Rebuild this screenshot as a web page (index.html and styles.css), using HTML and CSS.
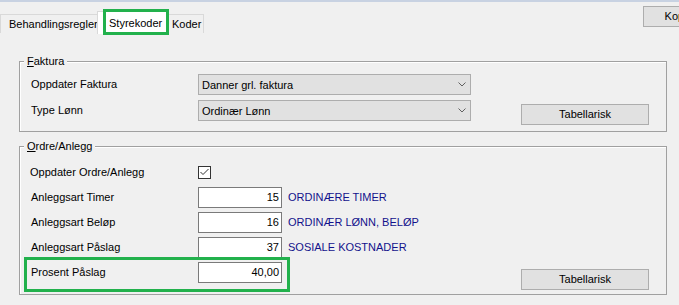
FILE: index.html
```html
<!DOCTYPE html>
<html>
<head>
    <title>Styrekoder</title>
    <link rel="stylesheet" href="styles.css">
</head>
<body>
    <div class="topbar"></div>

    <div class="header">
        <div class="tab">Behandlingsregler</div>
        <div class="tab selected">Styrekoder</div>
        <div class="tab last">Koder</div>
        <div class="btn top-btn">Kopier</div>
    </div>

    <div class="group faktura">
        <div class="legend"><u>F</u>aktura</div>
        <div class="row first">
            <div class="label">Oppdater Faktura</div>
            <div class="combo">
                <span>Danner grl. faktura</span>
                <svg width="8" height="5" viewBox="0 0 8 5"><polyline points="0.5,0.5 4,4 7.5,0.5" fill="none" stroke="#606060" stroke-width="1"/></svg>
            </div>
        </div>
        <div class="row">
            <div class="label">Type Lønn</div>
            <div class="combo">
                <span>Ordinær Lønn</span>
                <svg width="8" height="5" viewBox="0 0 8 5"><polyline points="0.5,0.5 4,4 7.5,0.5" fill="none" stroke="#606060" stroke-width="1"/></svg>
            </div>
            <div class="btn side-btn">Tabellarisk</div>
        </div>
    </div>

    <div class="group ordre">
        <div class="legend"><u>O</u>rdre/Anlegg</div>
        <div class="row check-row">
            <div class="label">Oppdater Ordre/Anlegg</div>
            <div class="checkbox">
                <svg width="11" height="11" viewBox="0 0 11 11"><polyline points="1.5,5 4,7.5 9.5,2" fill="none" stroke="#333" stroke-width="1"/></svg>
            </div>
        </div>
        <div class="row">
            <div class="label">Anleggsart Timer</div>
            <div class="input">15</div>
            <div class="desc">ORDINÆRE TIMER</div>
        </div>
        <div class="row">
            <div class="label">Anleggsart Beløp</div>
            <div class="input">16</div>
            <div class="desc">ORDINÆR LØNN, BELØP</div>
        </div>
        <div class="row">
            <div class="label">Anleggsart Påslag</div>
            <div class="input">37</div>
            <div class="desc">SOSIALE KOSTNADER</div>
        </div>
        <div class="row">
            <div class="label">Prosent Påslag</div>
            <div class="input">40,00</div>
            <div class="btn side-btn low">Tabellarisk</div>
        </div>
    </div>

    <div class="mark mark-tab"></div>
    <div class="mark mark-field"></div>
</body>
</html>
```

FILE: styles.css
```css
* {
    box-sizing: border-box;
}
body {
    margin: 0;
    background-color: #f0f0f0;
    font-family: "Liberation Sans", Arial, sans-serif;
    font-size: 11px;
    color: #000;
    position: relative;
    overflow: hidden;
    width: 679px;
    height: 305px;
}
.topbar {
    height: 2px;
    background-color: #c8d2e2;
}
.header {
    display: flex;
    align-items: flex-start;
    height: 32px;
}
.tab {
    margin-top: 12px;
    height: 19px;
    line-height: 18px;
    border: 1px solid #d9d9d9;
    border-bottom: none;
    background-color: #f0f0f0;
    padding-left: 8px;
    width: 98px;
    white-space: nowrap;
}
.tab.selected {
    margin-top: 9px;
    height: 23px;
    line-height: 22px;
    margin-left: -1px;
    width: 72px;
    padding-left: 11px;
    background-color: #fff;
}
.tab.last {
    margin-left: -1px;
    width: 36px;
    padding-left: 4px;
    border-left: none;
}
.btn {
    height: 21px;
    line-height: 19px;
    border: 1px solid #adadad;
    background-color: #e1e1e1;
    text-align: center;
    white-space: nowrap;
}
.top-btn {
    margin-left: auto;
    margin-top: 4px;
    margin-right: -39px;
    width: 75px;
    height: 21px;
}
.group {
    margin-left: 19px;
    width: 648px;
    border: 1px solid #a0a0a0;
    box-shadow: inset 1px 1px 0 #fff;
    padding: 0 17px 0 11px;
}
.faktura {
    margin-top: 27px;
    padding-bottom: 6px;
}
.ordre {
    margin-top: 14px;
    padding-bottom: 4px;
}
.legend {
    width: fit-content;
    margin: -7px 0 0 -7px;
    padding: 0 3px;
    height: 13px;
    line-height: 13px;
    background-color: #f0f0f0;
}
.row {
    display: flex;
    align-items: flex-start;
    margin-top: 4px;
}
.faktura .row {
    margin-top: 5px;
}
.faktura .row.first {
    margin-top: 6px;
}
.check-row {
    margin-top: 9px;
    margin-bottom: 1px;
}
.label {
    width: 167px;
    height: 21px;
    line-height: 21px;
    white-space: nowrap;
}
.check-row .label {
    margin-left: -1px;
    width: 168px;
}
.combo {
    width: 273px;
    height: 21px;
    border: 1px solid #adadad;
    background-color: #e1e1e1;
    display: flex;
    align-items: center;
    justify-content: space-between;
    padding: 0 4px 0 3px;
}
.side-btn {
    margin-left: auto;
    margin-top: 4px;
    width: 128px;
}
.side-btn.low {
    margin-top: 7px;
}
.checkbox {
    margin-top: 4px;
    width: 13px;
    height: 13px;
    border: 1px solid #333;
    background-color: #fff;
    display: flex;
}
.input {
    width: 84px;
    height: 21px;
    line-height: 19px;
    border: 1px solid #7a7a7a;
    background-color: #fff;
    text-align: right;
    padding-right: 2px;
}
.desc {
    margin-left: 6px;
    line-height: 21px;
    color: #12128c;
    white-space: nowrap;
}
.mark {
    position: absolute;
    border: 3px solid #22b14c;
}
.mark-tab {
    left: 103px;
    top: 9px;
    width: 66px;
    height: 26px;
}
.mark-field {
    left: 24px;
    top: 257px;
    width: 266px;
    height: 35px;
}
```
